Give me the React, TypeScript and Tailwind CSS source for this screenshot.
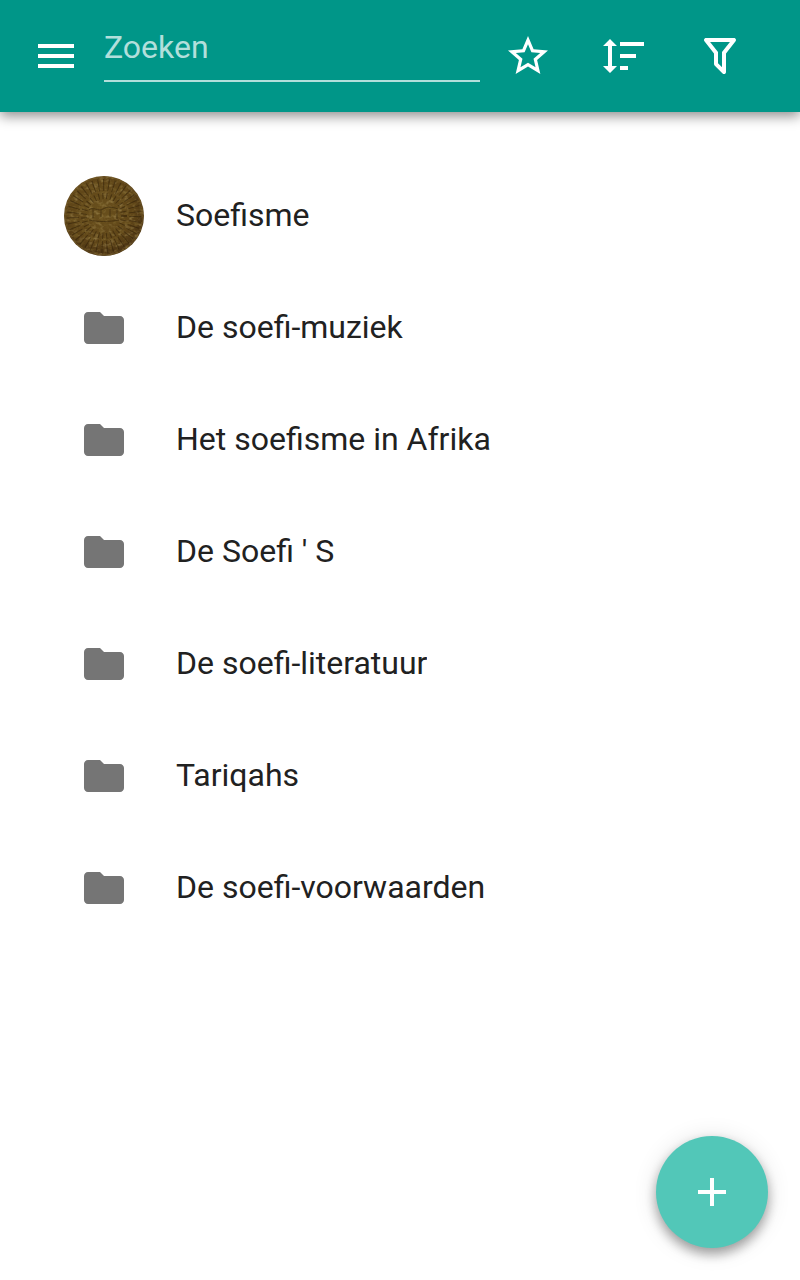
import type { ReactNode } from "react";

const ICONS = {
    menu: "M3 18h18v-2H3v2zm0-5h18v-2H3v2zm0-7v2h18V6H3z",
    star: "M22 9.24l-7.19-.62L12 2 9.19 8.63 2 9.24l5.46 4.73L5.82 21 12 17.27 18.18 21l-1.63-7.03L22 9.24zM12 15.4l-3.76 2.27 1-4.28-3.32-2.88 4.38-.38L12 6.1l1.71 4.04 4.38.38-3.32 2.88 1 4.28L12 15.4z",
    sort: "M10 13V11H18V13H10M10 19V17H14V19H10M10 7V5H22V7H10M6 17H8.5L5 20.5L1.5 17H4V7H1.5L5 3.5L8.5 7H6V17Z",
    filter: "M15 19.88C15.04 20.18 14.94 20.5 14.71 20.71C14.32 21.1 13.69 21.1 13.3 20.71L9.29 16.7C9.06 16.47 8.96 16.16 9 15.87V10.75L4.21 4.62C3.87 4.19 3.95 3.56 4.38 3.22C4.57 3.08 4.78 3 5 3H19C19.22 3 19.43 3.08 19.62 3.22C20.05 3.56 20.13 4.19 19.79 4.62L15 10.75V19.88M7.04 5L11 10.06V15.58L13 17.58V10.05L16.96 5H7.04Z",
    folder: "M10 4H4c-1.1 0-1.99.9-1.99 2L2 18c0 1.1.9 2 2 2h16c1.1 0 2-.9 2-2V8c0-1.1-.9-2-2-2h-8l-2-2z",
    add: "M19 13h-6v6h-2v-6H5v-2h6V5h2v6h6v2z",
};

const FOLDERS = [
    "De soefi-muziek",
    "Het soefisme in Afrika",
    "De Soefi ' S",
    "De soefi-literatuur",
    "Tariqahs",
    "De soefi-voorwaarden",
];

const Icon = ({ name }: { name: keyof typeof ICONS }) => (
    <svg viewBox="0 0 24 24" className="size-12 shrink-0 fill-current" aria-hidden="true">
        <path d={ICONS[name]} />
    </svg>
);

const IconButton = ({ name, label }: { name: keyof typeof ICONS; label: string }) => (
    <button
        type="button"
        aria-label={label}
        className="flex w-24 shrink-0 items-center justify-center self-stretch"
    >
        <Icon name={name} />
    </button>
);

// Engraved bronze medallion
const Medallion = () => (
    <svg viewBox="0 0 80 80" className="size-20 shrink-0" aria-hidden="true">
        <defs>
            <clipPath id="disc">
                <circle cx="40" cy="40" r="40" />
            </clipPath>
            <radialGradient id="bronze" cx="46%" cy="42%" r="58%">
                <stop offset="0" stopColor="#69501d" />
                <stop offset="0.7" stopColor="#5f4518" />
                <stop offset="1" stopColor="#493213" />
            </radialGradient>
            <filter id="relief" x="0" y="0" width="100%" height="100%">
                <feTurbulence type="fractalNoise" baseFrequency="0.2 0.26" numOctaves="3" seed="8" />
                <feColorMatrix values="0 0 0 0 0.18  0 0 0 0 0.11  0 0 0 0 0.02  3 0 0 0 -1.4" />
            </filter>
            <filter id="glint" x="0" y="0" width="100%" height="100%">
                <feTurbulence type="fractalNoise" baseFrequency="0.2 0.28" numOctaves="2" seed="21" />
                <feColorMatrix values="0 0 0 0 0.56  0 0 0 0 0.44  0 0 0 0 0.18  3 0 0 0 -1.5" />
            </filter>
        </defs>
        <g clipPath="url(#disc)">
            <rect width="80" height="80" fill="url(#bronze)" />
            <rect width="80" height="80" filter="url(#relief)" opacity="0.7" />
            <rect width="80" height="80" filter="url(#glint)" opacity="0.35" />
            <g fill="none" stroke="#2f1f08" opacity="0.55">
                <circle cx="40" cy="40" r="31" strokeWidth="12" strokeDasharray="1 4" />
                <circle cx="40" cy="40" r="20" strokeWidth="6" strokeDasharray="1 3" />
                <path d="M25 34c4-4 9 2 14-1s9-2 15 0M25 44c8 2 20 2 30 0M29 33v9M37 34v7M46 33v8M53 34v9" />
            </g>
            <circle cx="40" cy="40" r="39" fill="none" stroke="#7d652f" opacity="0.4" />
        </g>
    </svg>
);

const ListItem = ({ icon, title }: { icon: ReactNode; title: string }) => (
    <li>
        <a href="#" className="flex h-28 items-center gap-8 px-16">
            <span className="flex w-20 shrink-0 justify-center text-[#757575]">{icon}</span>
            <span className="truncate pb-0.5 text-[32px] leading-10">{title}</span>
        </a>
    </li>
);

const App = () => {
    return (
        <div className="flex min-h-screen flex-col bg-white font-[Roboto,sans-serif] text-[#212121]">
            <header className="flex h-28 items-center bg-[#009688] pr-8 pl-2 text-white shadow-[0_4px_12px_rgba(0,0,0,0.45)]">
                <IconButton name="menu" label="Menu" />
                <input
                    type="search"
                    aria-label="Zoeken"
                    placeholder="Zoeken"
                    className="h-13 min-w-0 flex-1 appearance-none border-b-2 border-[#b2dfdb] bg-transparent pb-4 text-[32px] outline-none placeholder:text-[#b2dfdb]"
                />
                <IconButton name="star" label="Favorieten" />
                <IconButton name="sort" label="Sorteren" />
                <IconButton name="filter" label="Filteren" />
            </header>

            <main className="flex-1 py-12">
                <ul>
                    <ListItem icon={<Medallion />} title="Soefisme" />
                    {FOLDERS.map((title) => (
                        <ListItem key={title} icon={<Icon name="folder" />} title={title} />
                    ))}
                </ul>
            </main>

            <button
                type="button"
                aria-label="Toevoegen"
                className="fixed right-8 bottom-8 flex size-28 items-center justify-center rounded-full bg-[#52c7b8] text-white shadow-[0_6px_12px_rgba(0,0,0,0.35),0_2px_24px_rgba(0,0,0,0.12)]"
            >
                <Icon name="add" />
            </button>
        </div>
    );
};

export default App;
